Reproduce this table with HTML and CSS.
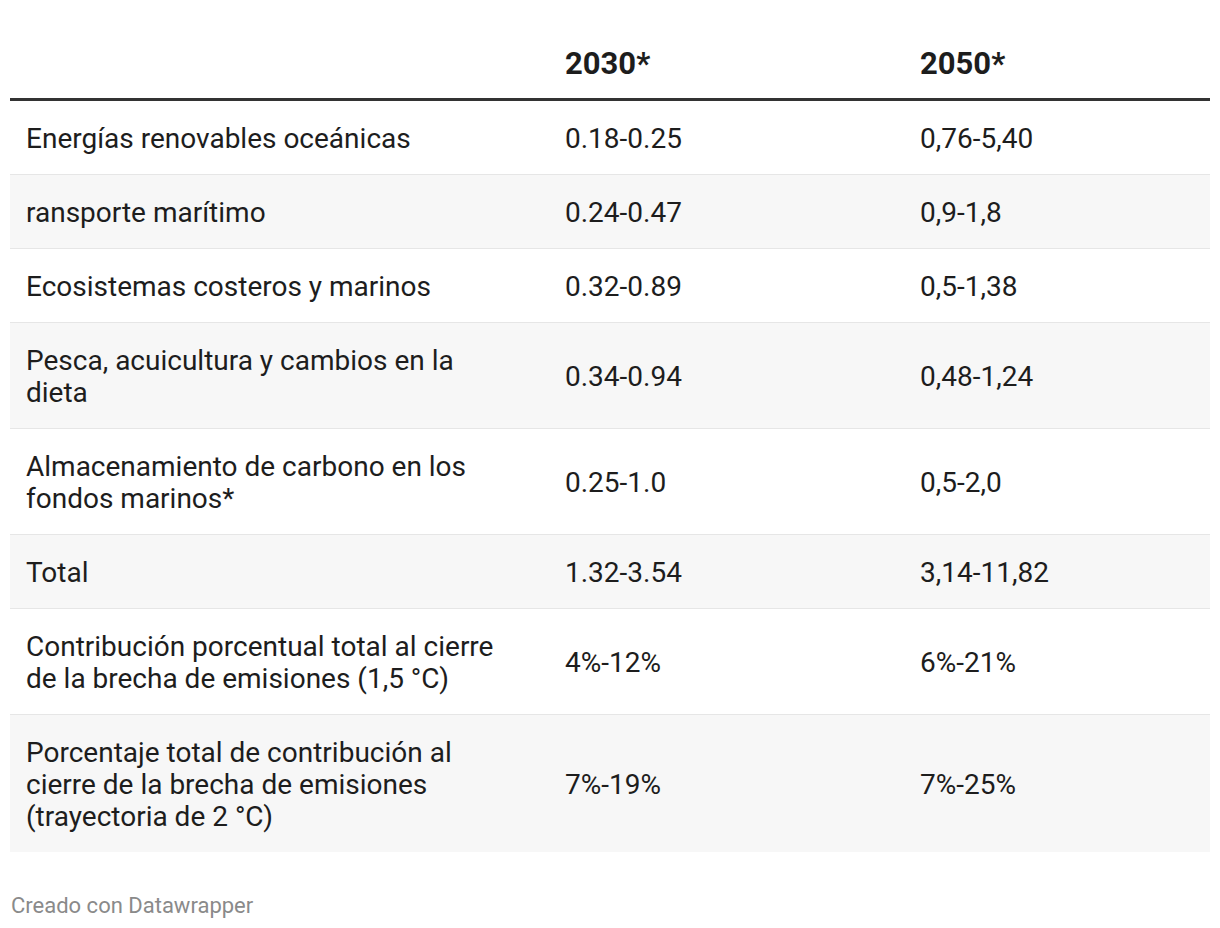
FILE: index.html
```html
<!DOCTYPE html>
<html lang="es">
<head>
<meta charset="utf-8">
<link rel="stylesheet" href="styles.css">
</head>
<body>
<div class="chart">
  <table class="dw-table">
    <colgroup>
      <col class="c1"><col class="c2"><col class="c3">
    </colgroup>
    <thead>
      <tr><th></th><th>2030*</th><th>2050*</th></tr>
    </thead>
    <tbody>
      <tr><td>Energías renovables oceánicas</td><td>0.18-0.25</td><td>0,76-5,40</td></tr>
      <tr class="alt"><td>ransporte marítimo</td><td>0.24-0.47</td><td>0,9-1,8</td></tr>
      <tr><td>Ecosistemas costeros y marinos</td><td>0.32-0.89</td><td>0,5-1,38</td></tr>
      <tr class="alt"><td>Pesca, acuicultura y cambios en la dieta</td><td>0.34-0.94</td><td>0,48-1,24</td></tr>
      <tr><td>Almacenamiento de carbono en los fondos marinos*</td><td>0.25-1.0</td><td>0,5-2,0</td></tr>
      <tr class="alt"><td>Total</td><td>1.32-3.54</td><td>3,14-11,82</td></tr>
      <tr><td>Contribución porcentual total al cierre de la brecha de emisiones (1,5 °C)</td><td>4%-12%</td><td>6%-21%</td></tr>
      <tr class="alt last"><td>Porcentaje total de contribución al cierre de la brecha de emisiones (trayectoria de 2 °C)</td><td>7%-19%</td><td>7%-25%</td></tr>
    </tbody>
  </table>
  <div class="footer">Creado con Datawrapper</div>
</div>
</body>
</html>
```

FILE: styles.css
```css
html, body {
  margin: 0;
  padding: 0;
  background: #ffffff;
}
body {
  font-family: Roboto, "Liberation Sans", sans-serif;
  color: #1d1d1d;
}
.chart {
  padding: 0 10px;
}
.dw-table {
  width: 1200px;
  border-collapse: collapse;
  table-layout: fixed;
}
.c1 { width: 540px; }
.c2 { width: 355px; }
.c3 { width: 305px; }
.dw-table th {
  text-align: left;
  font-weight: 700;
  font-size: 31px;
  line-height: 36px;
  height: 99px;
  box-sizing: border-box;
  padding: 0 15px 16px 15px;
  vertical-align: bottom;
  border-bottom: 3px solid #333333;
  color: #1d1d1d;
}
.dw-table td {
  font-size: 28px;
  line-height: 32px;
  padding: 22.5px 15px 18.5px 15px;
  vertical-align: middle;
  border-bottom: 1px solid #e6e6e6;
  color: #1d1d1d;
}
.dw-table td:first-child {
  padding-left: 16px;
  padding-right: 34px;
}
.dw-table tr.alt td {
  background: #f7f7f7;
}
.dw-table tr.last td {
  border-bottom: none;
}
.footer {
  margin-top: 42px;
  font-size: 22px;
  line-height: 24px;
  color: #8a8a8a;
  padding-left: 1px;
}
```
